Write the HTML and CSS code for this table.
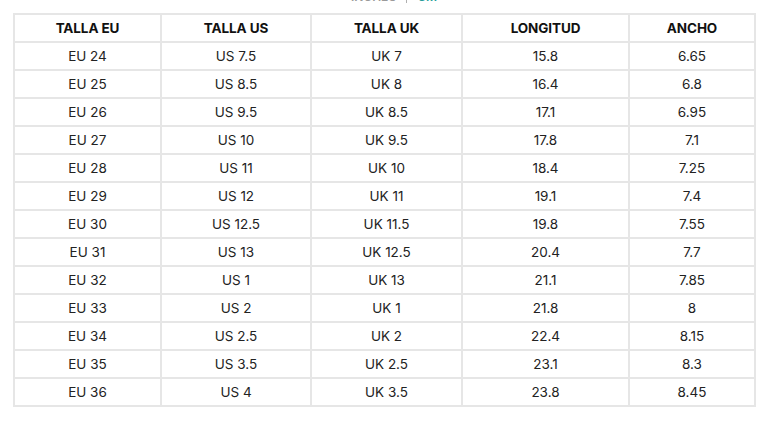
FILE: index.html
```html
<!DOCTYPE html>
<html lang="es">
<head>
<meta charset="utf-8">
<title>Guía de tallas</title>
<link rel="stylesheet" href="styles.css">
</head>
<body>
<div class="units">
  <span class="unit">INCHES</span>
  <span class="sep"></span>
  <span class="unit active">CM</span>
</div>
<table class="sizes">
  <colgroup>
    <col class="c1"><col class="c2"><col class="c3"><col class="c4"><col class="c5">
  </colgroup>
  <thead>
    <tr><th>TALLA EU</th><th>TALLA US</th><th>TALLA UK</th><th>LONGITUD</th><th>ANCHO</th></tr>
  </thead>
  <tbody>
    <tr><td>EU 24</td><td>US 7.5</td><td>UK 7</td><td>15.8</td><td>6.65</td></tr>
    <tr><td>EU 25</td><td>US 8.5</td><td>UK 8</td><td>16.4</td><td>6.8</td></tr>
    <tr><td>EU 26</td><td>US 9.5</td><td>UK 8.5</td><td>17.1</td><td>6.95</td></tr>
    <tr><td>EU 27</td><td>US 10</td><td>UK 9.5</td><td>17.8</td><td>7.1</td></tr>
    <tr><td>EU 28</td><td>US 11</td><td>UK 10</td><td>18.4</td><td>7.25</td></tr>
    <tr><td>EU 29</td><td>US 12</td><td>UK 11</td><td>19.1</td><td>7.4</td></tr>
    <tr><td>EU 30</td><td>US 12.5</td><td>UK 11.5</td><td>19.8</td><td>7.55</td></tr>
    <tr><td>EU 31</td><td>US 13</td><td>UK 12.5</td><td>20.4</td><td>7.7</td></tr>
    <tr><td>EU 32</td><td>US 1</td><td>UK 13</td><td>21.1</td><td>7.85</td></tr>
    <tr><td>EU 33</td><td>US 2</td><td>UK 1</td><td>21.8</td><td>8</td></tr>
    <tr><td>EU 34</td><td>US 2.5</td><td>UK 2</td><td>22.4</td><td>8.15</td></tr>
    <tr><td>EU 35</td><td>US 3.5</td><td>UK 2.5</td><td>23.1</td><td>8.3</td></tr>
    <tr><td>EU 36</td><td>US 4</td><td>UK 3.5</td><td>23.8</td><td>8.45</td></tr>
  </tbody>
</table>
</body>
</html>
```

FILE: styles.css
```css
html, body {
  margin: 0;
  padding: 0;
  background: #ffffff;
}
body {
  font-family: Inter, "Noto Sans", "Liberation Sans", sans-serif;
  color: #1f1f1f;
  padding: 0 8px 0 13px;
}
.units {
  display: flex;
  justify-content: center;
  align-items: center;
  gap: 10px;
  height: 14px;
  line-height: 14px;
  margin-top: -10px;
  margin-bottom: 9px;
  font-size: 12px;
  font-weight: 600;
  padding-left: 20px;
}
.unit {
  color: #9a9a9a;
}
.unit.active {
  color: #2a9d9a;
}
.sep {
  width: 1px;
  height: 12px;
  background: #b0b0b0;
}
.sizes {
  border-collapse: collapse;
  width: 741px;
  table-layout: fixed;
  font-size: 13.5px;
}
.c1 { width: 147px; }
.c2 { width: 150px; }
.c3 { width: 151px; }
.c4 { width: 167px; }
.c5 { width: 126px; }
.sizes th,
.sizes td {
  border: 2px solid #e6e6e6;
  height: 28px;
  padding: 0;
  text-align: center;
  vertical-align: middle;
  box-sizing: border-box;
}
.sizes th {
  font-weight: 700;
  color: #111;
  letter-spacing: -0.1px;
}
.sizes td {
  font-weight: 400;
  color: #222;
}
```
